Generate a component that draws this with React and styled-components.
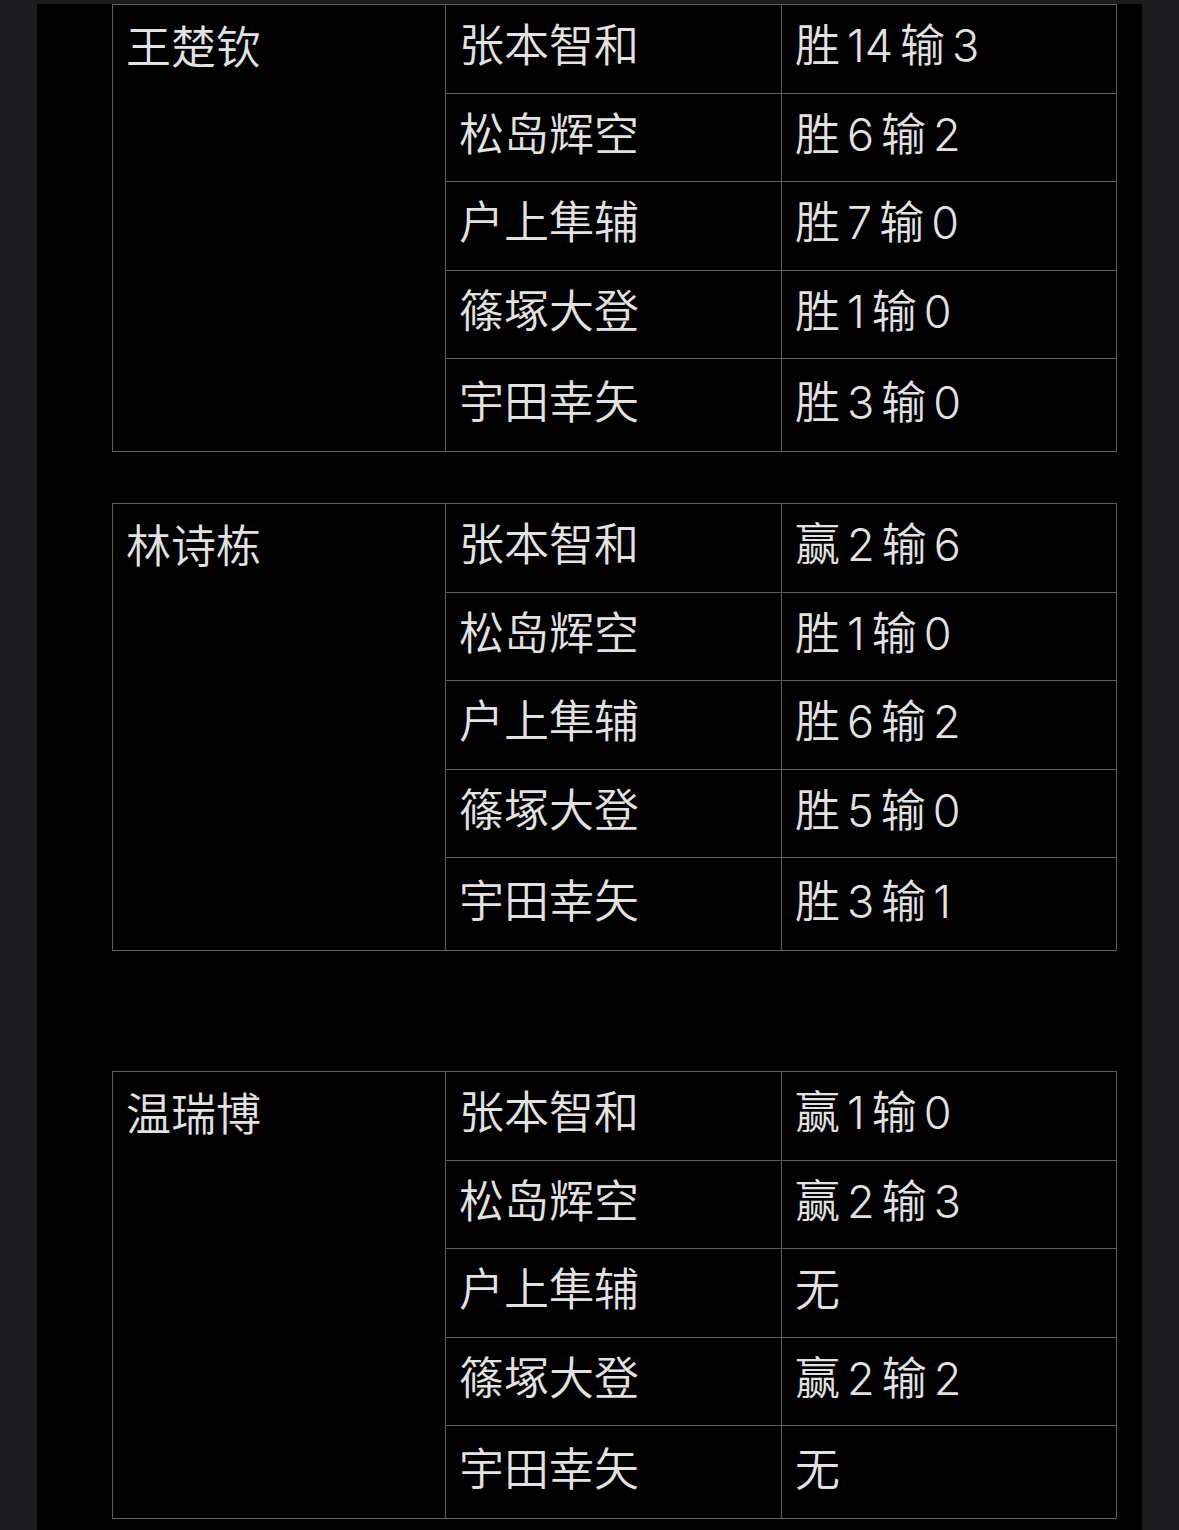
import React from 'react'
import styled, { createGlobalStyle } from 'styled-components'

const GlobalStyle = createGlobalStyle`
  html, body {
    margin: 0;
    padding: 0;
    background: #1c1c1f;
  }
  body {
    font-family: Inter, "Noto Sans CJK SC", sans-serif;
  }
`

const groups = [
  {
    name: '王楚钦',
    gap: 51,
    rows: [
      ['张本智和', ['胜', '14', '输', '3']],
      ['松岛辉空', ['胜', '6', '输', '2']],
      ['户上隼辅', ['胜', '7', '输', '0']],
      ['篠塚大登', ['胜', '1', '输', '0']],
      ['宇田幸矢', ['胜', '3', '输', '0']],
    ],
  },
  {
    name: '林诗栋',
    gap: 120,
    rows: [
      ['张本智和', ['赢', '2', '输', '6']],
      ['松岛辉空', ['胜', '1', '输', '0']],
      ['户上隼辅', ['胜', '6', '输', '2']],
      ['篠塚大登', ['胜', '5', '输', '0']],
      ['宇田幸矢', ['胜', '3', '输', '1']],
    ],
  },
  {
    name: '温瑞博',
    gap: 0,
    rows: [
      ['张本智和', ['赢', '1', '输', '0']],
      ['松岛辉空', ['赢', '2', '输', '3']],
      ['户上隼辅', ['无']],
      ['篠塚大登', ['赢', '2', '输', '2']],
      ['宇田幸矢', ['无']],
    ],
  },
]

const App = () => {
  return (
    <>
      <GlobalStyle />
      <Page>
        <Panel>
          {groups.map((g) => (
            <Table key={g.name} $gap={g.gap}>
              <colgroup>
                <col style={{ width: 333 }} />
                <col style={{ width: 336 }} />
                <col />
              </colgroup>
              <tbody>
                {g.rows.map((r, i) => (
                  <Row key={r[0]} $last={i === g.rows.length - 1}>
                    {i === 0 && (
                      <NameCell rowSpan={g.rows.length}>
                        <NameText>{g.name}</NameText>
                      </NameCell>
                    )}
                    <Cell>{r[0]}</Cell>
                    <Cell>
                      <Score>
                        {r[1].map((part, k) => (
                          <span key={k}>{part}</span>
                        ))}
                      </Score>
                    </Cell>
                  </Row>
                ))}
              </tbody>
            </Table>
          ))}
        </Panel>
      </Page>
    </>
  )
}

export default App

const Page = styled.div`
  width: 1179px;
  height: 1530px;
  padding-top: 4px;
  box-sizing: border-box;
  overflow: hidden;
`

const Panel = styled.div`
  margin: 0 37px;
  height: 100%;
  background: #000;
  padding: 0 26px 0 75px;
  box-sizing: border-box;
`

const Table = styled.table`
  width: 1005px;
  border-collapse: collapse;
  table-layout: fixed;
  margin-bottom: ${(p) => p.$gap}px;
  color: #e2e2e2;
  font-size: 45px;
  font-weight: 350;
`

const Row = styled.tr`
  height: ${(p) => (p.$last ? 93 : 88.5)}px;
`

const Cell = styled.td`
  border: 1px solid #5e5e5e;
  padding: 0 0 6px 13px;
  vertical-align: middle;
  white-space: nowrap;
  line-height: 1;
`

const Score = styled.span`
  display: inline-flex;
  gap: 7px;
`

const NameCell = styled.td`
  border: 1px solid #5e5e5e;
  padding: 0 0 0 13px;
  vertical-align: top;
  line-height: 1;
`

const NameText = styled.div`
  height: 84px;
  display: flex;
  align-items: center;
`
